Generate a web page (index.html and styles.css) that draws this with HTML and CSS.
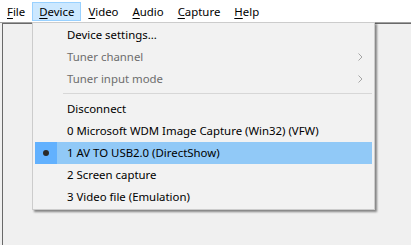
FILE: index.html
```html
<!DOCTYPE html>
<html>
<head>
<meta charset="utf-8">
<link rel="stylesheet" href="styles.css">
</head>
<body>
<div class="menubar">
  <div class="mb-item"><u>F</u>ile</div>
  <div class="mb-item active"><u>D</u>evice</div>
  <div class="mb-item"><u>V</u>ideo</div>
  <div class="mb-item"><u>A</u>udio</div>
  <div class="mb-item"><u>C</u>apture</div>
  <div class="mb-item"><u>H</u>elp</div>
</div>
<div class="frame">
  <div class="pane"></div>
</div>
<div class="dropdown">
  <div class="item"><span class="check"></span><span class="label">Device settings...</span></div>
  <div class="item disabled"><span class="check"></span><span class="label">Tuner channel</span><svg class="chev" width="5" height="8" viewBox="0 0 5 8"><path d="M0.5 0.5 L4 4 L0.5 7.5" fill="none" stroke="#a6a6a6" stroke-width="1"/></svg></div>
  <div class="item disabled"><span class="check"></span><span class="label">Tuner input mode</span><svg class="chev" width="5" height="8" viewBox="0 0 5 8"><path d="M0.5 0.5 L4 4 L0.5 7.5" fill="none" stroke="#a6a6a6" stroke-width="1"/></svg></div>
  <div class="sep"></div>
  <div class="item"><span class="check"></span><span class="label">Disconnect</span></div>
  <div class="item"><span class="check"></span><span class="label">0 Microsoft WDM Image Capture (Win32) (VFW)</span></div>
  <div class="item hl"><span class="check"><span class="dot"></span></span><span class="label">1 AV TO USB2.0 (DirectShow)</span></div>
  <div class="item"><span class="check"></span><span class="label">2 Screen capture</span></div>
  <div class="item"><span class="check"></span><span class="label">3 Video file (Emulation)</span></div>
</div>
</body>
</html>
```
FILE: styles.css
```css
html, body {
  margin: 0;
  padding: 0;
}
body {
  width: 411px;
  height: 245px;
  overflow: hidden;
  background: #f0f0f0;
  font-family: "Noto Sans", "Segoe UI", sans-serif;
  font-size: 11.4px;
  color: #000;
  position: relative;
}
.menubar {
  height: 22px;
  background: #ffffff;
  display: flex;
  align-items: flex-start;
}
.mb-item {
  box-sizing: border-box;
  height: 19px;
  margin-top: 2px;
  padding: 0 6px;
  line-height: 17px;
  border: 1px solid transparent;
  white-space: nowrap;
}
.mb-item.active {
  background: #cce8ff;
  border-color: #99d1ff;
}
.mb-item u {
  text-decoration: underline;
  text-underline-offset: 2px;
}
.frame {
  border-top: 1px solid #a0a0a0;
  height: 222px;
}
.pane {
  margin-left: 2px;
  border-top: 1px solid #696969;
  border-left: 1px solid #696969;
  height: 221px;
  background: #f0f0f0;
}
.dropdown {
  position: absolute;
  left: 32px;
  top: 22px;
  width: 343px;
  box-sizing: border-box;
  background: #f2f2f2;
  border: 1px solid #cccccc;
  padding: 1px 2px;
  box-shadow: 2px 2px 2px rgba(0, 0, 0, 0.45);
}
.item {
  box-sizing: border-box;
  height: 22px;
  padding-bottom: 1px;
  display: flex;
  align-items: center;
  white-space: nowrap;
}
.item .check {
  width: 22px;
  height: 21px;
  flex: none;
  display: flex;
  align-items: center;
  justify-content: center;
}
.item .label {
  padding-left: 10px;
  flex: 1;
}
.item.disabled {
  color: #6d6d6d;
}
.chev {
  margin-right: 9px;
  flex: none;
}
.item.hl {
  background: #91c9f7;
}
.item.hl .check {
  background: #62b1fe;
  height: 22px;
  margin-bottom: -1px;
}
.dot {
  width: 6px;
  height: 6px;
  border-radius: 50%;
  background: #2a2a2a;
  margin-bottom: 1px;
}
.sep {
  height: 1px;
  margin: 3px 0 4px 28px;
  background: #d7d7d7;
}
```
